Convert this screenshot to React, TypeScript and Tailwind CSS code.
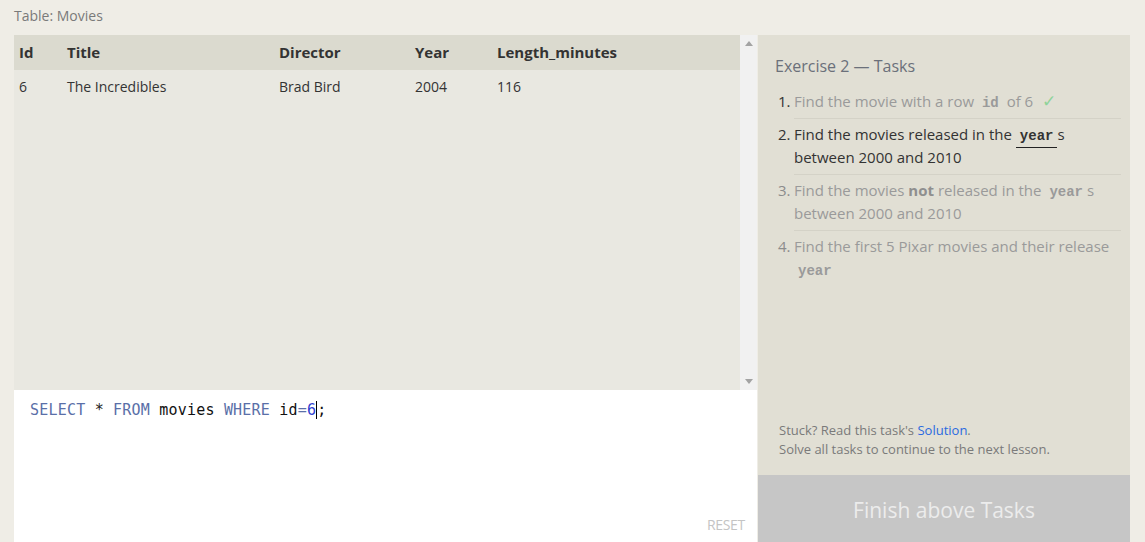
const SANS = { fontFamily: '"Open Sans", "Noto Sans", sans-serif' };

function Code({ children, dark, underline }: { children: React.ReactNode; dark?: boolean; underline?: boolean }) {
  return (
    <code
      className={
        "font-bold text-[14px] leading-none px-[4px] font-['Liberation_Mono','DejaVu_Sans_Mono',monospace] " +
        (dark ? "text-[#333]" : "text-[#9a9a9a]") +
        (underline ? " border-b border-[#222] pb-[3px]" : "")
      }
    >
      {children}
    </code>
  );
}

const tasks = [
  { n: 1, done: true },
  { n: 2, active: true },
  { n: 3 },
  { n: 4 },
];

export default function App() {
  return (
    <div style={SANS} className="h-[542px] w-[1145px] overflow-hidden bg-[#efede6] pl-[14px] pr-[15px]">
      {/* title */}
      <div className="h-[35px] pt-[5px] text-[14px] text-[#7a7a7a]">Table: Movies</div>

      <div className="flex">
        {/* left: table + editor */}
        <div className="w-[743px] flex flex-col">
          <div className="h-[355px] flex">
            <div className="flex-1 bg-[#e9e8e1]">
              <div className="h-[35px] bg-[#dbdacf] flex items-center text-[15px] font-bold text-[#333]">
                <div className="w-[53px] pl-[5px]">Id</div>
                <div className="w-[212px]">Title</div>
                <div className="w-[136px]">Director</div>
                <div className="w-[82px]">Year</div>
                <div>Length_minutes</div>
              </div>
              <div className="h-[32px] flex items-center text-[14px] text-[#333]">
                <div className="w-[53px] pl-[5px]">6</div>
                <div className="w-[212px]">The Incredibles</div>
                <div className="w-[136px]">Brad Bird</div>
                <div className="w-[82px]">2004</div>
                <div>116</div>
              </div>
            </div>
            <div className="w-[17px] bg-[#f1f1f1] flex flex-col items-center justify-between py-[6px]">
              <svg width="8" height="5" viewBox="0 0 8 5"><path d="M0 5 L4 0 L8 5 Z" fill="#a3a3a3" /></svg>
              <svg width="8" height="5" viewBox="0 0 8 5"><path d="M0 0 L4 5 L8 0 Z" fill="#a3a3a3" /></svg>
            </div>
          </div>
          <div className="h-[160px] bg-white relative">
            <div className="pl-[16px] pt-[9px] text-[15px] tracking-[0.2px] font-['DejaVu_Sans_Mono','Liberation_Mono',monospace]">
              <span className="text-[#5a6fa8]">SELECT</span> <span className="text-[#222]">*</span>{" "}
              <span className="text-[#5a6fa8]">FROM</span> <span className="text-[#111]">movies</span>{" "}
              <span className="text-[#5a6fa8]">WHERE</span> <span className="text-[#111]">id</span>
              <span className="text-[#5a6fa8]">=</span>
              <span className="text-[#2f3fd0]">6</span>
              <span className="border-l border-black text-[#111]">;</span>
            </div>
            <div className="absolute right-[12px] top-[124px] text-[14px] text-[#c4c4c4] tracking-[-0.3px]">RESET</div>
          </div>
        </div>

        {/* right: tasks */}
        <div className="ml-[1px] w-[372px] flex flex-col">
          <div className="h-[440px] bg-[#e1dfd4] flex flex-col pl-[17px] pr-[9px]">
            <div className="pt-[19px] text-[16px] text-[#6b707a]">Exercise 2 — Tasks</div>
            <ol className="mt-[12px] text-[15px] leading-[23px]">
              {tasks.map((t, i) => (
                <li key={t.n} className="flex">
                  <span className={"w-[19px] pl-[3px] " + (t.n <= 2 ? "text-[#333]" : "text-[#8c8c8c]")}>{t.n}.</span>
                  <div
                    className={
                      "flex-1 pb-[5px] mb-[4px] " +
                      (i < 3 ? "border-b border-[#d4d2c7] " : "") +
                      (t.active ? "text-[#333]" : "text-[#9a9a9a]")
                    }
                  >
                    {t.n === 1 && (
                      <>
                        Find the movie with a row <Code>id</Code> of 6{" "}
                        <span className="ml-[5px] text-[17px] leading-none text-[#8fd39a]">✓</span>
                      </>
                    )}
                    {t.n === 2 && (
                      <>
                        Find the movies released in the <Code dark underline>year</Code>s
                        <br />
                        between 2000 and 2010
                      </>
                    )}
                    {t.n === 3 && (
                      <>
                        Find the movies <b className="text-[#8f8f8f]">not</b> released in the <Code>year</Code>s
                        <br />
                        between 2000 and 2010
                      </>
                    )}
                    {t.n === 4 && (
                      <>
                        Find the first 5 Pixar movies and their release
                        <br />
                        <Code>year</Code>
                      </>
                    )}
                  </div>
                </li>
              ))}
            </ol>
            <div className="mt-auto pb-[16px] pl-[4px] text-[13px] leading-[19px] text-[#7a7a7a]">
              <div>
                Stuck? Read this task's <span className="text-[#2a6ae0]">Solution</span>.
              </div>
              <div>Solve all tasks to continue to the next lesson.</div>
            </div>
          </div>
          <div className="h-[80px] bg-[#c6c6c6] flex justify-center pt-[20px] text-[21px] text-[#ececec]">
            Finish above Tasks
          </div>
        </div>
      </div>
    </div>
  );
}
